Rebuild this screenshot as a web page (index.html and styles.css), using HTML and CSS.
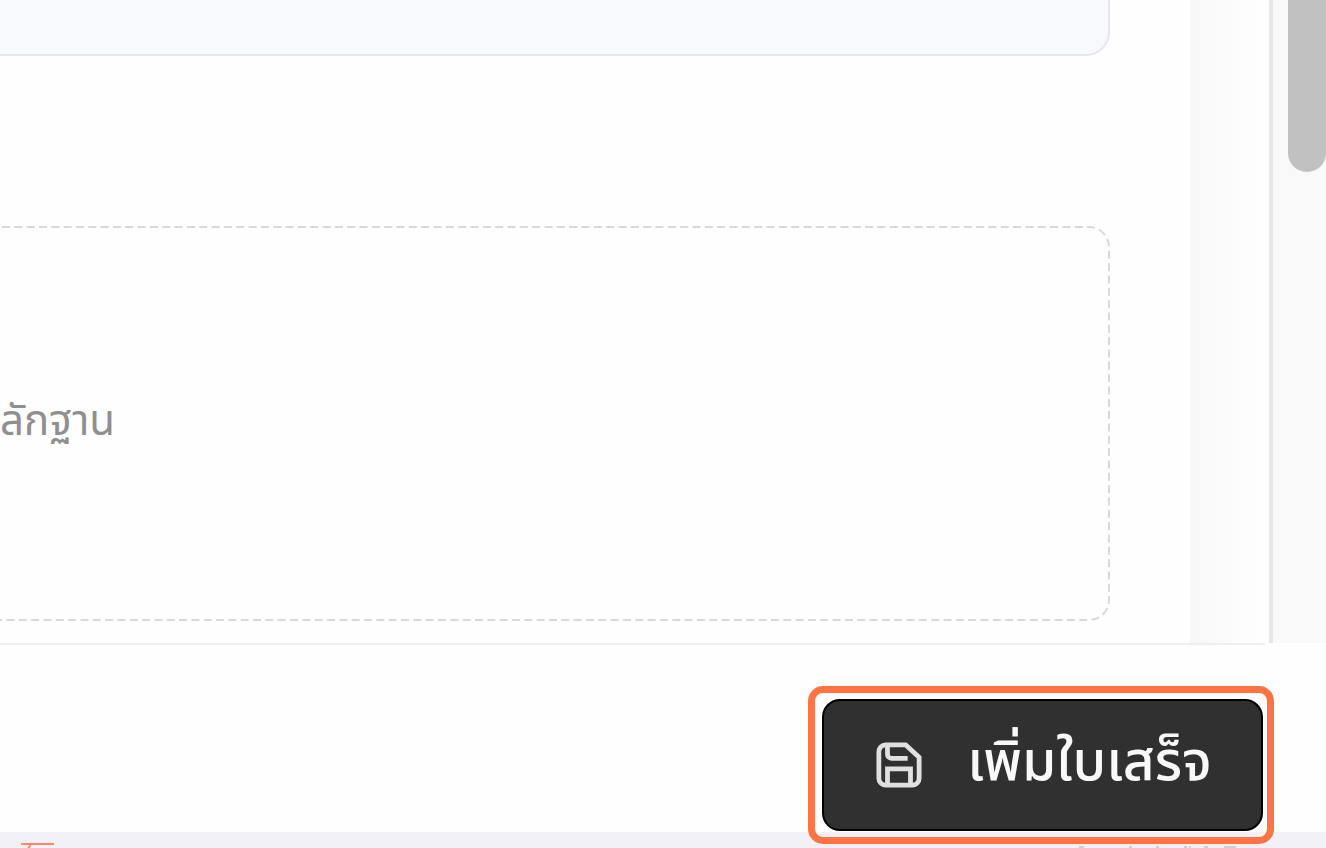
FILE: index.html
```html
<!DOCTYPE html>
<html lang="th">
<head>
<meta charset="utf-8">
<title>เพิ่มใบเสร็จ</title>
<link rel="stylesheet" href="styles.css">
</head>
<body>
<div class="page">
  <div class="body">
    <main class="content">
      <section class="panel"></section>
      <section class="dropzone">
        <svg class="dashes" aria-hidden="true"><rect class="dash-rect" x="-20" y="1" rx="20" ry="20"/></svg>
        <span class="hint">ลักฐาน</span>
      </section>
    </main>
    <div class="shade"></div>
    <div class="track"><div class="thumb"></div></div>
  </div>
  <footer class="actions">
    <div class="highlight">
      <button class="save" type="button">
        <svg class="icon" viewBox="0 0 48 48" aria-hidden="true"><path d="M10 3h21l14 13v22a7 7 0 0 1-7 7H10a7 7 0 0 1-7-7V10a7 7 0 0 1 7-7zM12 4v9a4 4 0 0 0 4 4h17M12 44V28h24v16"/></svg>
        <span>เพิ่มใบเสร็จ</span>
      </button>
    </div>
  </footer>
  <div class="strip">
    <svg class="mark" viewBox="0 0 34 6" aria-hidden="true"><path d="M0 2h33M10 2l-3 5"/></svg>
    <svg class="marks" viewBox="0 0 170 4" aria-hidden="true"><path d="M10 3h5M60 3h3M87 3h3M115 3h3M121 2v2M135 3h4M155 3h12"/></svg>
  </div>
</div>
</body>
</html>
```
FILE: styles.css
```css
* { box-sizing: border-box; }
body { margin: 0; background: #fefefe; font-family: "Noto Sans Thai", "Noto Sans", "Open Sans", sans-serif; }
.page { display: flex; flex-direction: column; height: 100vh; overflow: hidden; }
.body { display: flex; flex: 1; min-height: 0; }
.content { flex: 1; padding-right: 80px; display: flex; flex-direction: column; gap: 170px; padding-bottom: 22px; border-bottom: 2px solid #f0f0f0; }
.panel { height: 56px; background: #f8f9fc; border: solid #e6e6ec; border-width: 0 2px 2px 0; border-bottom-right-radius: 24px; }
.dropzone { position: relative; flex: 1; display: flex; align-items: center; overflow: hidden; }
.dashes { position: absolute; inset: 0; width: 100%; height: 100%; }
.dash-rect { width: calc(100% + 19px); height: calc(100% - 2px); fill: none; stroke: #d9d9d9; stroke-width: 2; stroke-dasharray: 8 4.33; stroke-dashoffset: -2; }
.hint { padding-bottom: 4px; color: #8f8f8f; font-size: 42px; line-height: 56px; }
.shade { width: 75px; border-bottom: 2px solid #f0f0f0; background: linear-gradient(to right, #f8f8f8, #fefefe); }
.track { width: 57px; margin-left: 4px; margin-bottom: 2px; border-left: 4px solid #e6e6e6; background: #f9f9f9; padding-left: 15px; }
.thumb { width: 38px; height: 172px; background: #c1c1c1; border-radius: 0 0 19px 19px; }
.actions { display: flex; justify-content: flex-end; padding: 41px 52px 0 0; height: 187px; }
.highlight { position: relative; z-index: 1; width: 466px; height: 158px; padding: 6px 4px 6px 7px; border: 7px solid #ff7442; border-radius: 15px; }
.save { display: flex; align-items: center; justify-content: center; gap: 45px; width: 100%; height: 100%; padding: 0 0 0 3px; color: #f8f8f8; background: #303030; border: 2px solid #000; border-radius: 18px; font: 500 55px/64px "Noto Sans Thai", "Noto Sans", sans-serif; }
.save span { padding-bottom: 3px; }
.icon { width: 46px; height: 46px; fill: none; stroke: #e0e0e0; stroke-width: 5; }
.strip { display: flex; justify-content: space-between; align-items: flex-end; height: 16px; padding: 0 87px 0 21px; background: #f2f1f7; }
.mark { width: 34px; height: 6px; fill: none; stroke: #ff8a65; stroke-width: 2; }
.marks { width: 170px; height: 4px; fill: none; stroke: #d0d0d4; stroke-width: 2; }
```
